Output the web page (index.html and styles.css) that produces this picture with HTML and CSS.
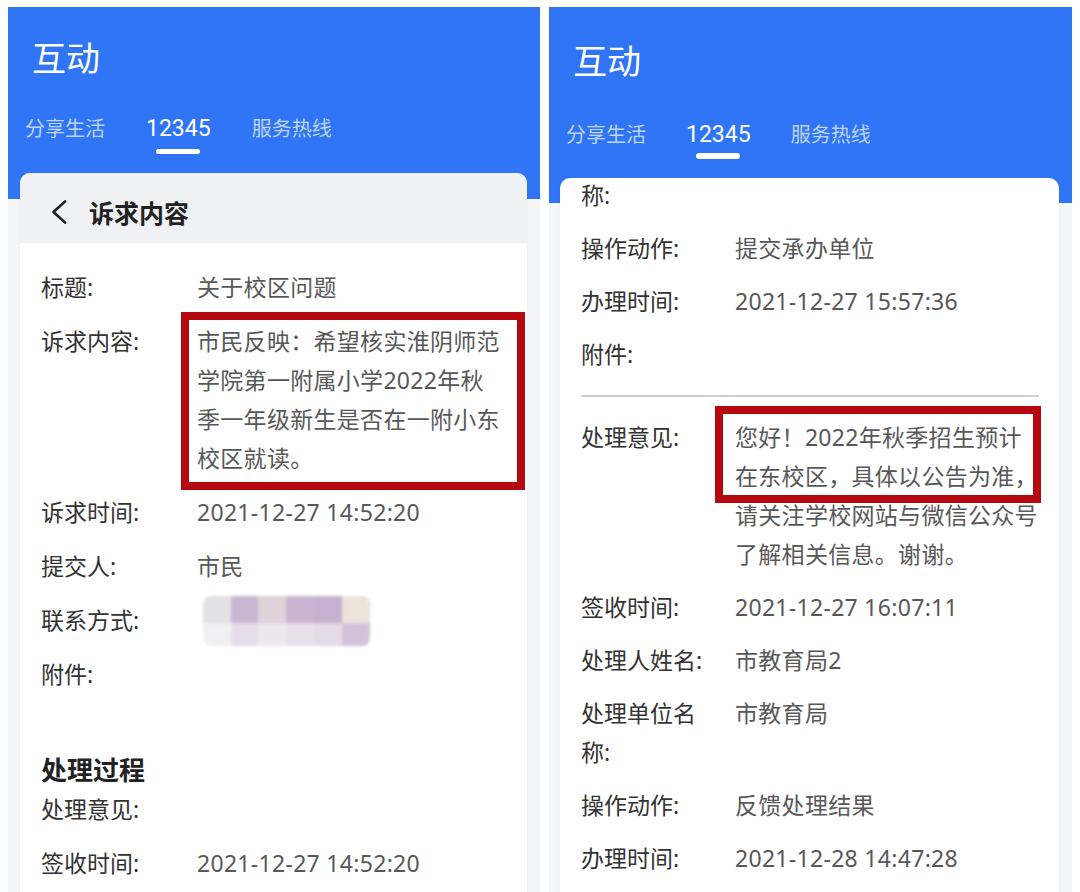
FILE: index.html
```html
<!DOCTYPE html>
<html lang="zh-CN">
<head>
    <meta charset="UTF-8">
    <meta name="viewport" content="width=device-width, initial-scale=1.0">
    <title>互动 - 12345</title>
    <link rel="stylesheet" href="styles.css">
</head>
<body>
    <div class="screens">
        <!-- 左：诉求内容 -->
        <section class="phone">
            <header class="topbar">
                <h1 class="topbar-title">互动</h1>
                <nav class="tabs">
                    <span class="tab">分享生活</span>
                    <span class="tab tab-active">12345</span>
                    <span class="tab">服务热线</span>
                </nav>
            </header>

            <div class="card">
                <div class="card-head">
                    <svg class="back" viewBox="0 0 16 24"><polyline points="14,1.5 2.5,12 14,22.5"/></svg>
                    <span>诉求内容</span>
                </div>
                <div class="card-body">
                    <div class="row"><div class="label">标题:</div><div class="value">关于校区问题</div></div>
                    <div class="row">
                        <div class="label">诉求内容:</div>
                        <div class="value">
                            <div class="mark">市民反映：希望核实淮阴师范<br>学院第一附属小学2022年秋<br>季一年级新生是否在一附小东<br>校区就读。</div>
                        </div>
                    </div>
                    <div class="row"><div class="label">诉求时间:</div><div class="value">2021-12-27 14:52:20</div></div>
                    <div class="row"><div class="label">提交人:</div><div class="value">市民</div></div>
                    <div class="row"><div class="label">联系方式:</div><div class="value"><div class="mosaic"></div></div></div>
                    <div class="row"><div class="label">附件:</div><div class="value"></div></div>

                    <h2 class="section-title">处理过程</h2>
                    <div class="row"><div class="label">处理意见:</div><div class="value"></div></div>
                    <div class="row"><div class="label">签收时间:</div><div class="value">2021-12-27 14:52:20</div></div>
                </div>
            </div>
        </section>

        <!-- 右：处理过程（已滚动） -->
        <section class="phone phone-b">
            <header class="topbar">
                <h1 class="topbar-title">互动</h1>
                <nav class="tabs">
                    <span class="tab">分享生活</span>
                    <span class="tab tab-active">12345</span>
                    <span class="tab">服务热线</span>
                </nav>
            </header>

            <div class="card">
                <div class="card-body">
                    <div class="row row-cut"><div class="label">称:</div><div class="value"></div></div>
                    <div class="row"><div class="label">操作动作:</div><div class="value">提交承办单位</div></div>
                    <div class="row"><div class="label">办理时间:</div><div class="value">2021-12-27 15:57:36</div></div>
                    <div class="row"><div class="label">附件:</div><div class="value"></div></div>
                    <div class="divider"></div>
                    <div class="row">
                        <div class="label">处理意见:</div>
                        <div class="value">
                            <div class="mark">您好！2022年秋季招生预计<br>在东校区，具体以公告为准，</div>
                            <div>请关注学校网站与微信公众号<br>了解相关信息。谢谢。</div>
                        </div>
                    </div>
                    <div class="row"><div class="label">签收时间:</div><div class="value">2021-12-27 16:07:11</div></div>
                    <div class="row"><div class="label">处理人姓名:</div><div class="value">市教育局2</div></div>
                    <div class="row"><div class="label">处理单位名称:</div><div class="value">市教育局</div></div>
                    <div class="row"><div class="label">操作动作:</div><div class="value">反馈处理结果</div></div>
                    <div class="row"><div class="label">办理时间:</div><div class="value">2021-12-28 14:47:28</div></div>
                </div>
            </div>
        </section>
    </div>
</body>
</html>
```

FILE: styles.css
```css
* {
    box-sizing: border-box;
}

html, body {
    margin: 0;
    height: 100%;
}

body {
    background: #ffffff;
    font-family: "Noto Sans", "Noto Sans CJK SC", sans-serif;
    overflow: hidden;
}

.screens {
    display: flex;
    gap: 9px;
    padding: 7px 0 0 8px;
    height: 892px;
}

.phone {
    width: 532px;
    background: #f4f5f7;
    display: flex;
    flex-direction: column;
    overflow: hidden;
}

.phone-b {
    width: 523px;
}

/* blue header */
.topbar {
    background: #2f75f5;
    padding: 31px 0 45px;
}

.phone-b .topbar {
    padding: 34px 0 44px;
}

.topbar-title {
    margin: 0 0 0 24px;
    font-size: 34px;
    line-height: 40px;
    font-weight: 400;
    color: #ffffff;
}

.tabs {
    display: flex;
    align-items: flex-start;
    gap: 41px;
    margin: 37px 0 0 17px;
}

.phone-b .tabs {
    gap: 40px;
    margin-top: 40px;
}

.tab {
    font-size: 20px;
    line-height: 28px;
    color: #bfd4fb;
}

.tab-active {
    display: flex;
    flex-direction: column;
    align-items: center;
    font-family: Roboto, "Noto Sans CJK SC", sans-serif;
    font-size: 23px;
    color: #ffffff;
}

.tab-active::after {
    content: "";
    width: 44px;
    height: 5px;
    margin-top: 6px;
    border-radius: 3px;
    background: #ffffff;
}

.phone-b .tab-active::after {
    height: 6px;
    margin-top: 4px;
}

/* card */
.card {
    flex: 1;
    margin: -26px 13px 0 12px;
    background: #ffffff;
    border-radius: 10px 10px 0 0;
    box-shadow: 0 1px 3px rgba(0, 0, 0, 0.04);
    overflow: hidden;
}

.phone-b .card {
    margin: -25px 13px 0 11px;
}

.card-head {
    display: flex;
    align-items: center;
    gap: 22px;
    height: 70px;
    padding: 8px 0 0 31px;
    background: #f0f1f3;
    font-size: 25px;
    font-weight: 700;
    color: #222222;
}

.back {
    width: 16px;
    height: 24px;
    fill: none;
    stroke: #222222;
    stroke-width: 2.6;
    stroke-linecap: round;
    stroke-linejoin: round;
}

.card-body {
    padding: 17.5px 12px 0 21px;
}

.phone-b .card-body {
    padding-top: 0;
}

/* label / value rows */
.row {
    display: flex;
    padding: 7.5px 0;
    font-size: 23px;
    line-height: 39px;
}

.phone-b .row {
    padding: 7px 0;
}

.row-cut {
    margin-top: -9px;
}

.label {
    flex: none;
    width: 128px;
    margin-right: 28px;
    color: #333333;
}

.phone-b .label {
    margin-right: 26px;
}

.value {
    flex: 1;
    color: #585858;
    letter-spacing: 0.3px;
}

.section-title {
    margin: 53px 0 -2px;
    font-size: 26px;
    line-height: 30px;
    font-weight: 700;
    color: #222222;
}

.divider {
    height: 2px;
    margin: 14px 8px 14px 0;
    background: #cfcfcf;
}

/* red annotation box */
.mark {
    position: relative;
}

.mark::after {
    content: "";
    position: absolute;
    top: -10px;
    right: -10px;
    bottom: -12px;
    left: -16px;
    border: 8px solid #b50811;
}

.phone-b .mark::after {
    top: -12px;
    right: 6px;
    bottom: -7px;
    left: -20px;
}

/* blurred phone number */
.mosaic {
    width: 167px;
    height: 50px;
    margin: -5.5px 0 -5.5px 6px;
    border-radius: 8px;
    filter: blur(1.5px);
    background:
        linear-gradient(to right,
            #e2e1e6 0 17%, #c9b6d3 17% 33%, #ddd3d9 33% 50%,
            #cbb4d1 50% 67%, #c5b0d0 67% 83%, #ece3db 83% 100%) top / 100% 54% no-repeat,
        linear-gradient(to right,
            #f0f0f2 0 17%, #e5dde9 17% 33%, #ece7ed 33% 50%,
            #e7dfea 50% 67%, #e3dae7 67% 83%, #d2c2d9 83% 100%) bottom / 100% 46% no-repeat;
}
```
